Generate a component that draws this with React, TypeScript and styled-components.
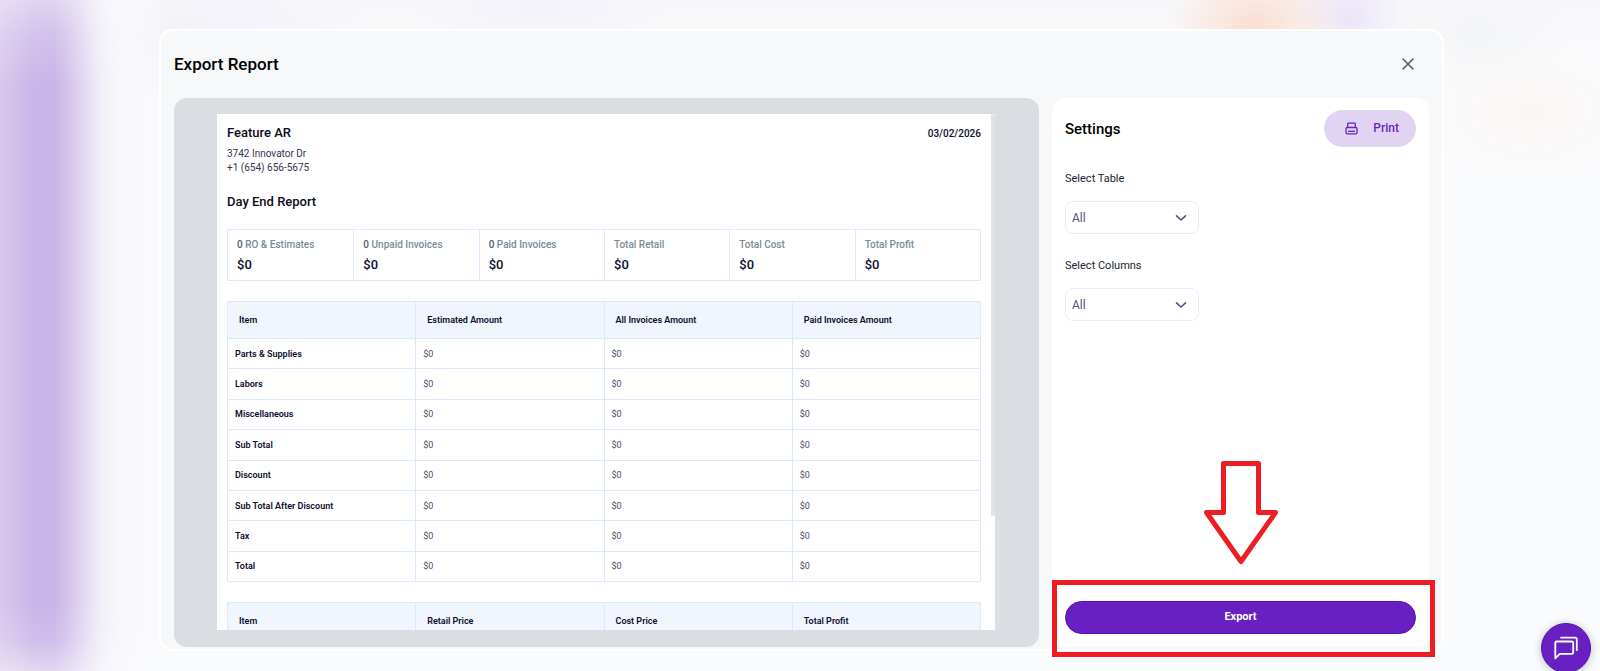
import React from "react";
import styled, { createGlobalStyle, css } from "styled-components";

const GlobalStyle = createGlobalStyle`
  *, *::before, *::after { box-sizing: border-box; }
  body {
    margin: 0;
    font-family: Roboto, "Liberation Sans", sans-serif;
    color: #0c0c2e;
    background: #fafbfd;
  }
  h1, h2, h3, p { margin: 0; }
  button, select { font-family: inherit; cursor: pointer; }
`;

const Page = styled.div`
  display: flex;
  flex-direction: column;
  height: 100vh;
  min-height: 480px;
  padding: 29px 156px 20px 159px;
  overflow: hidden;
  background:
    linear-gradient(180deg, rgba(250, 251, 253, 0.45) 0, rgba(250, 251, 253, 0.2) 35px, rgba(250, 251, 253, 0) 90px) 0 0 / 160px 100% no-repeat,
    linear-gradient(0deg, rgba(250, 251, 253, 0.5) 0, rgba(250, 251, 253, 0.15) 30px, rgba(250, 251, 253, 0) 70px) 0 0 / 160px 100% no-repeat,
    radial-gradient(ellipse 90px 90px at 1255px 38px, #fbdacd 0, rgba(251, 226, 216, 0.7) 45%, rgba(251, 240, 235, 0) 100%),
    radial-gradient(ellipse 60px 60px at 1348px 20px, #ebe4f7 0, rgba(240, 236, 250, 0) 100%),
    radial-gradient(ellipse 110px 70px at 1530px 112px, #fbf6f4 0, rgba(251, 246, 244, 0) 100%),
    radial-gradient(ellipse 100px 60px at 1475px 35px, #f4f5f7 0, rgba(244, 245, 247, 0) 100%),
    radial-gradient(ellipse 130px 50px at 235px 25px, #f4f2fb 0, rgba(244, 242, 251, 0) 100%),
    radial-gradient(ellipse 130px 50px at 540px 10px, #f4f2fa 0, rgba(244, 242, 250, 0) 100%),
    linear-gradient(90deg, #d8c7ec 0, #d2c0ea 14px, #c9b5e8 34px, #c8b4e8 54px, #d2c0ea 66px, #ddd0f0 78px, #e9e1f6 90px, #f2eff9 102px, #f7f6fb 116px, #f9f9fb 134px, rgba(250, 251, 253, 0) 175px),
    radial-gradient(ellipse 130px 70px at 120px 35px, #eff0f1 0, rgba(241, 242, 243, 0) 100%),
    linear-gradient(180deg, #f7f7fa 0, rgba(250, 251, 253, 0) 60px);
`;

const Modal = styled.main`
  flex: 1;
  min-height: 0;
  display: flex;
  flex-direction: column;
  padding: 0 13px 2px;
  border: 2px solid #fff;
  border-radius: 14px;
  background: #f7f8fa;
`;

const ModalHeader = styled.header`
  display: flex;
  align-items: center;
  justify-content: space-between;
  height: 67px;
  flex: none;
  padding: 0 11px 2px 0;
`;

const Title = styled.h1`
  font-size: 17px;
  line-height: 20px;
  font-weight: 500;
  color: #000;
`;

const CloseButton = styled.button`
  display: grid;
  place-items: center;
  width: 20px;
  height: 20px;
  padding: 0;
  border: 0;
  background: none;
  color: #4a6375;
`;

const Body = styled.div`
  flex: 1;
  min-height: 0;
  display: grid;
  grid-template-columns: minmax(0, 1fr) 377px;
  gap: 13px;
`;

const Preview = styled.section`
  min-height: 0;
  display: flex;
  padding: 16px 44px 17px 43px;
  border-radius: 13px;
  background: #dadde2;
`;

const Sheet = styled.div`
  position: relative;
  flex: 1;
  min-width: 0;
  padding: 10px 14px 0 10px;
  overflow: hidden;
  background: #fff;
`;

const ScrollThumb = styled.span`
  position: absolute;
  top: 0;
  right: 0;
  width: 4px;
  height: 78%;
  border-radius: 2px;
  background: #e2e2e3;
`;

const ShopHeader = styled.div`
  display: flex;
  align-items: flex-start;
  justify-content: space-between;
`;

const SheetTitle = styled.h2`
  font-size: 13px;
  line-height: 18px;
  font-weight: 500;
  color: #0b0b22;
`;

const Address = styled.p`
  margin-top: 5px;
  font-size: 10px;
  line-height: 14px;
  color: #35354f;
`;

const ReportDate = styled.time`
  font-size: 10px;
  line-height: 19px;
  font-weight: 500;
`;

const ReportName = styled(SheetTitle)`
  margin: 18px 0;
`;

const Summary = styled.dl`
  display: grid;
  grid-template-columns: repeat(6, 1fr);
  margin: 0;
  border: 1px solid #dfe9fb;
`;

const SummaryCell = styled.div`
  height: 50px;
  padding: 7px 9px;
  & + & { border-left: 1px solid #dfe9fb; }
`;

const SummaryLabel = styled.dt`
  font-size: 10px;
  line-height: 16px;
  font-weight: 500;
  color: #7b8b96;
  b {
    font-weight: 500;
    color: #4d5c68;
  }
`;

const SummaryValue = styled.dd`
  margin: 3px 0 0;
  font-size: 13px;
  line-height: 18px;
  font-weight: 500;
`;

const Table = styled.table<{ $filled: boolean }>`
  width: 100%;
  height: ${({ $filled }) => ($filled ? "281px" : "auto")};
  margin-top: 20px;
  table-layout: fixed;
  border-collapse: collapse;
  font-size: 9px;
  line-height: 14px;
`;

const cell = css`
  border: 1px solid #dce8fb;
  text-align: left;
`;

const HeadCell = styled.th`
  ${cell}
  height: 37px;
  padding: 0 11px;
  font-weight: 600;
  background: #f1f5fd;
`;

const RowHead = styled.th`
  ${cell}
  height: 30px;
  padding: 0 7px;
  font-weight: 600;
`;

const Cell = styled.td`
  ${cell}
  height: 30px;
  padding: 0 7px;
  color: #4b4b68;
`;

const Settings = styled.aside`
  display: flex;
  flex-direction: column;
  justify-content: space-between;
  min-height: 0;
  border-radius: 13px;
  background: #fff;
`;

const SettingsForm = styled.div`
  padding: 12px 13px 0;
`;

const SettingsHeader = styled.div`
  display: flex;
  align-items: center;
  justify-content: space-between;
  margin-bottom: 24px;
`;

const SettingsTitle = styled.h2`
  font-size: 15px;
  line-height: 20px;
  font-weight: 500;
  color: #000;
`;

const PrintButton = styled.button`
  display: flex;
  align-items: center;
  justify-content: space-between;
  width: 92px;
  height: 37px;
  padding: 0 17px 0 21px;
  border: 0;
  border-radius: 19px;
  background: #e1d4f3;
  color: #6a1fc2;
  font-size: 12px;
  line-height: 14px;
  font-weight: 500;
  span { padding-bottom: 2px; }
`;

const Field = styled.div`
  display: flex;
  flex-direction: column;
  align-items: flex-start;
  gap: 14px;
  margin-bottom: 24px;
`;

const Label = styled.label`
  font-size: 11px;
  line-height: 16px;
  color: #1a2530;
`;

const SelectBox = styled.span`
  display: inline-grid;
  grid-template-columns: 1fr 36px;
  align-items: center;
  width: 134px;
  color: #4f547c;
  svg { grid-area: 1 / 2; pointer-events: none; z-index: 1; justify-self: center; }
`;

const Select = styled.select`
  grid-area: 1 / 1 / 2 / 3;
  appearance: none;
  height: 33px;
  padding: 0 6px;
  border: 1px solid #e6eefc;
  border-radius: 8px;
  background: #fff;
  color: inherit;
  font-size: 12px;
`;

const Footer = styled.div`
  position: relative;
  padding: 0 13px 13px;
`;

const ExportButton = styled.button`
  display: block;
  width: 100%;
  height: 33px;
  padding: 0 0 2px;
  border: 1px solid #5a0cb8;
  border-radius: 17px;
  background: #6820c2;
  color: #fff;
  font-size: 11px;
  font-weight: 700;
`;

const Highlight = styled.span`
  position: absolute;
  inset: -21px -6px -10px 0;
  border: 5px solid #ee1c23;
  pointer-events: none;
`;

const Arrow = styled.svg`
  position: absolute;
  left: 152px;
  bottom: 82px;
  pointer-events: none;
`;

const ChatButton = styled.button`
  position: fixed;
  right: 9px;
  bottom: -2px;
  display: grid;
  place-items: center;
  width: 50px;
  height: 50px;
  padding: 0;
  border: 1px solid #5a0cb8;
  border-radius: 50%;
  background: #6820c2;
  color: #fff;
  box-shadow: 0 1px 8px rgba(0, 0, 0, 0.25);
`;

const summary: { count?: string; label: string }[] = [
  { count: "0", label: "RO & Estimates" },
  { count: "0", label: "Unpaid Invoices" },
  { count: "0", label: "Paid Invoices" },
  { label: "Total Retail" },
  { label: "Total Cost" },
  { label: "Total Profit" },
];

const amountHeads = ["Item", "Estimated Amount", "All Invoices Amount", "Paid Invoices Amount"];
const priceHeads = ["Item", "Retail Price", "Cost Price", "Total Profit"];
const amountItems = [
  "Parts & Supplies",
  "Labors",
  "Miscellaneous",
  "Sub Total",
  "Discount",
  "Sub Total After Discount",
  "Tax",
  "Total",
];

function ReportTable({ heads, items = [] }: { heads: string[]; items?: string[] }) {
  return (
    <Table $filled={items.length > 0}>
      <thead>
        <tr>
          {heads.map((h) => (
            <HeadCell key={h} scope="col">{h}</HeadCell>
          ))}
        </tr>
      </thead>
      <tbody>
        {items.map((item) => (
          <tr key={item}>
            <RowHead scope="row">{item}</RowHead>
            {heads.slice(1).map((h) => (
              <Cell key={h}>$0</Cell>
            ))}
          </tr>
        ))}
      </tbody>
    </Table>
  );
}

function SelectField({ id, label }: { id: string; label: string }) {
  return (
    <Field>
      <Label htmlFor={id}>{label}</Label>
      <SelectBox>
        <Select id={id} defaultValue="all">
          <option value="all">All</option>
        </Select>
        <svg width="12" height="8" viewBox="0 0 12 8" fill="none" aria-hidden="true">
          <path d="M1.500 1.800 6 6l4.500-4.200" stroke="currentColor" strokeWidth="1.600" strokeLinecap="round" strokeLinejoin="round" />
        </svg>
      </SelectBox>
    </Field>
  );
}

export default function App() {
  return (
    <Page>
      <GlobalStyle />
      <Modal>
        <ModalHeader>
          <Title>Export Report</Title>
          <CloseButton aria-label="Close">
            <svg width="12" height="12" viewBox="0 0 12 12" fill="none">
              <path d="M1 1l10 10M11 1L1 11" stroke="currentColor" strokeWidth="1.600" strokeLinecap="round" />
            </svg>
          </CloseButton>
        </ModalHeader>
        <Body>
          <Preview>
            <Sheet>
              <ShopHeader>
                <div>
                  <SheetTitle>Feature AR</SheetTitle>
                  <Address>
                    3742 Innovator Dr
                    <br />
                    +1 (654) 656-5675
                  </Address>
                </div>
                <ReportDate dateTime="2026-03-02">03/02/2026</ReportDate>
              </ShopHeader>
              <ReportName>Day End Report</ReportName>
              <Summary>
                {summary.map(({ count, label }) => (
                  <SummaryCell key={label}>
                    <SummaryLabel>
                      {count && <b>{count} </b>}
                      {label}
                    </SummaryLabel>
                    <SummaryValue>$0</SummaryValue>
                  </SummaryCell>
                ))}
              </Summary>
              <ReportTable heads={amountHeads} items={amountItems} />
              <ReportTable heads={priceHeads} />
              <ScrollThumb />
            </Sheet>
          </Preview>
          <Settings>
            <SettingsForm>
              <SettingsHeader>
                <SettingsTitle>Settings</SettingsTitle>
                <PrintButton>
                  <svg width="13" height="13" viewBox="0 0 13 13" fill="none" stroke="currentColor" strokeWidth="1.300" aria-hidden="true">
                    <path d="M2.700 5.500V1.700q0-.6.600-.6h6.400q.6 0 .6.600v3.800" />
                    <rect x="1" y="5.500" width="11" height="6.400" rx="1.400" />
                    <path d="M3 9.300h7" />
                  </svg>
                  <span>Print</span>
                </PrintButton>
              </SettingsHeader>
              <SelectField id="table" label="Select Table" />
              <SelectField id="columns" label="Select Columns" />
            </SettingsForm>
            <Footer>
              <ExportButton>Export</ExportButton>
              <Highlight />
              <Arrow width="74" height="104" viewBox="0 0 74 104" fill="#fff" aria-hidden="true">
                <path d="M19.500 2.500h35v49H71.500L37 100.500 2.500 51.500h17z" stroke="#ee1c23" strokeWidth="5" strokeLinejoin="round" />
              </Arrow>
            </Footer>
          </Settings>
        </Body>
      </Modal>
      <ChatButton aria-label="Open chat">
        <svg width="26" height="26" viewBox="0 0 26 26" fill="none" stroke="currentColor" strokeWidth="1.800" strokeLinejoin="round">
          <path d="M3.500 6.500h15.200q1.500 0 1.500 1.500v9.400q0 1.500-1.500 1.500H6.800L2.300 23.400V8q0-1.500 1.200-1.500z" />
          <path d="M8 2.600h14.200q1.600 0 1.600 1.600v11" strokeLinecap="round" />
        </svg>
      </ChatButton>
    </Page>
  );
}
